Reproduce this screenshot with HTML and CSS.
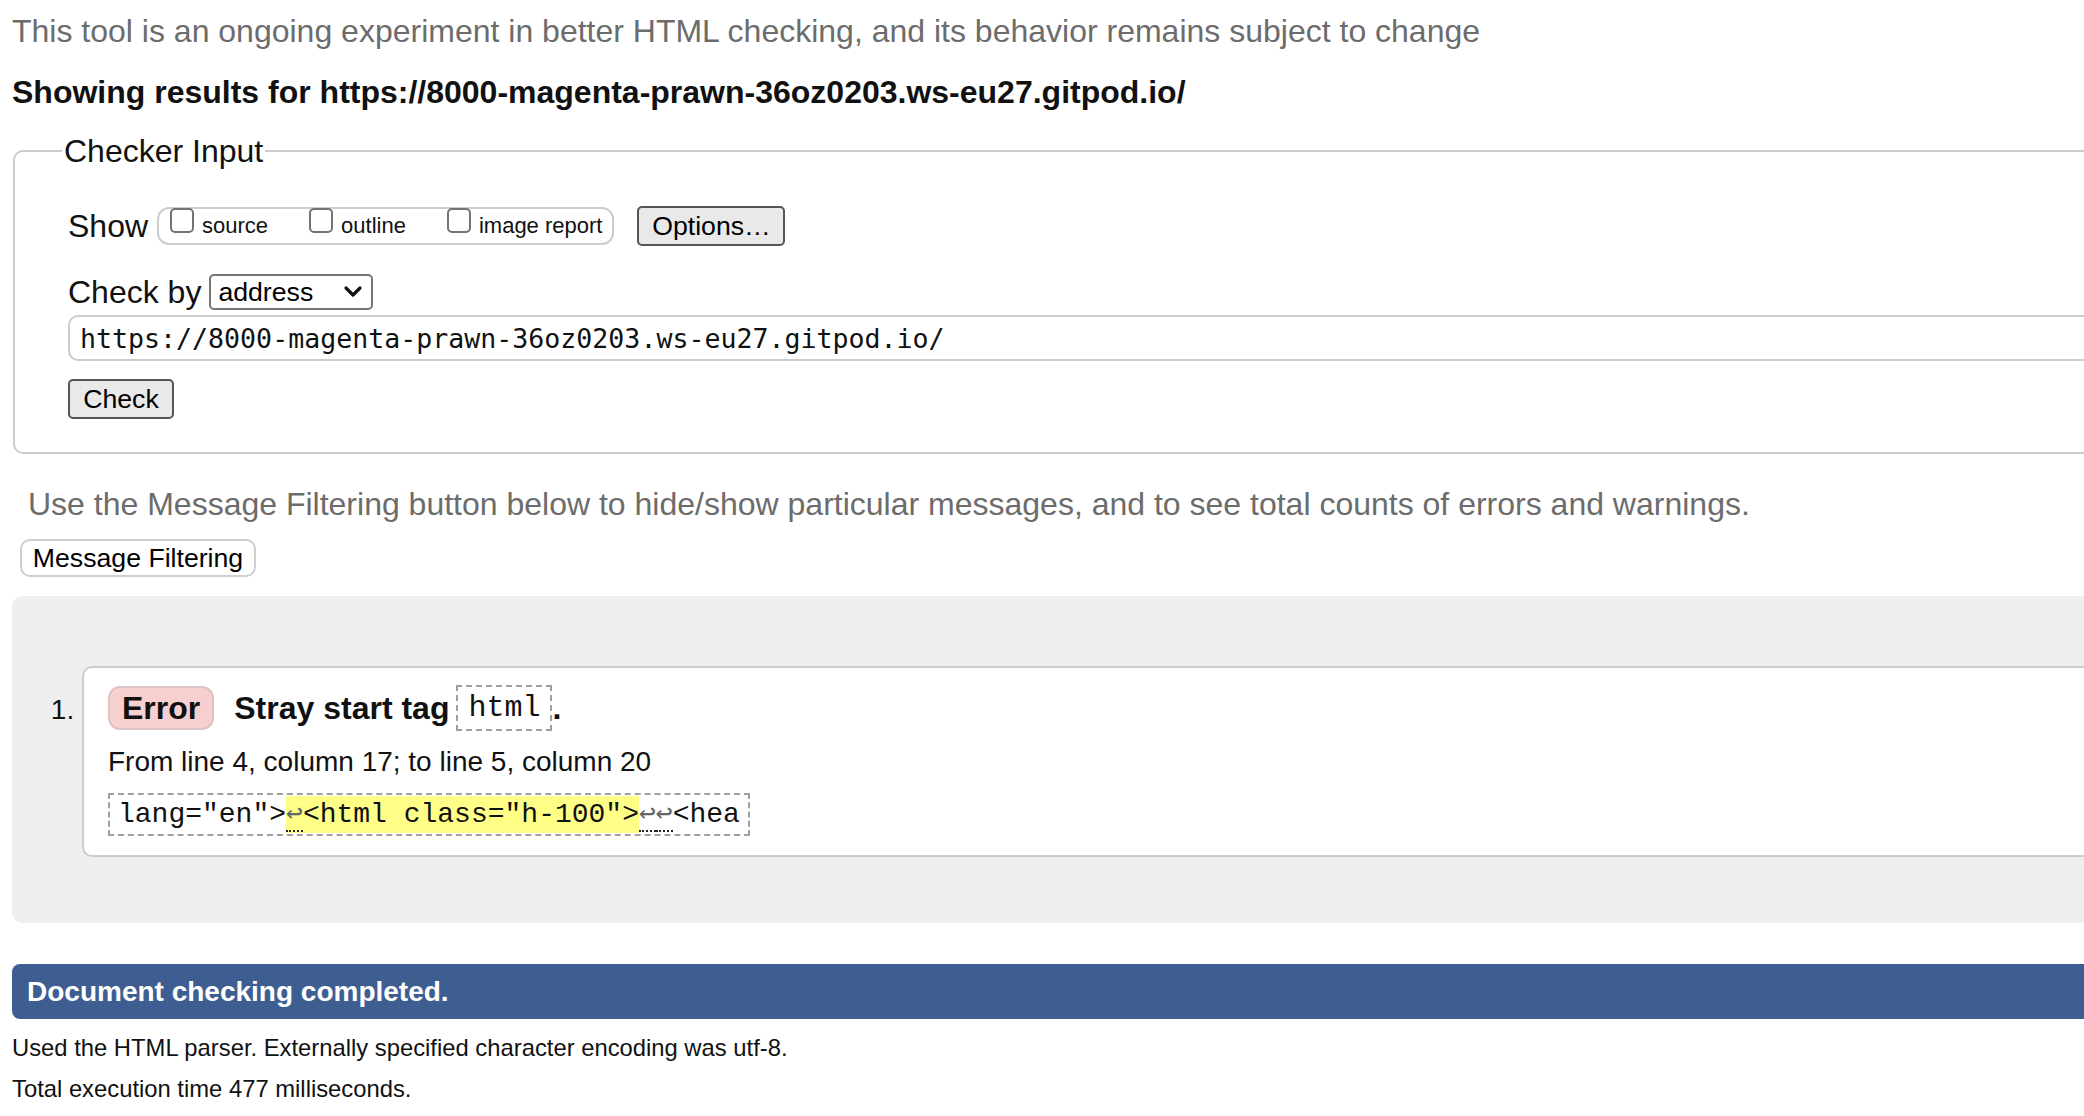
FILE: index.html
```html
<!DOCTYPE html>
<html lang="en">
<head>
<meta charset="utf-8">
<title>Nu Html Checker</title>
<link rel="stylesheet" href="styles.css">
</head>
<body>
<div class="page">
  <p class="intro">This tool is an ongoing experiment in better HTML checking, and its behavior remains subject to change</p>
  <h2 class="results-title">Showing results for https://8000-magenta-prawn-36oz0203.ws-eu27.gitpod.io/</h2>

  <form class="checker">
    <fieldset class="checker-fieldset">
      <legend class="checker-legend">Checker Input</legend>
      <div class="row show-row">
        <span class="row-label">Show</span>
        <div class="show-group">
          <label class="opt"><input class="box" type="checkbox"><span class="opt-text">source</span></label>
          <label class="opt"><input class="box" type="checkbox"><span class="opt-text">outline</span></label>
          <label class="opt opt-last"><input class="box" type="checkbox"><span class="opt-text">image report</span></label>
        </div>
        <button type="button" class="btn options-btn">Options…</button>
      </div>
      <div class="row checkby-row">
        <span class="row-label checkby-label">Check by</span>
        <span class="select-wrap">
          <select class="select"><option>address</option></select>
          <svg class="chevron" width="20" height="14" viewBox="0 0 20 14"><path d="M3 3 L10 10 L17 3" fill="none" stroke="#111" stroke-width="3.2" stroke-linecap="round" stroke-linejoin="round"/></svg>
        </span>
      </div>
      <input class="url" type="text" value="https://8000-magenta-prawn-36oz0203.ws-eu27.gitpod.io/">
      <div class="check-row"><button type="button" class="btn check-btn">Check</button></div>
    </fieldset>
  </form>

  <p class="filter-intro">Use the Message Filtering button below to hide/show particular messages, and to see total counts of errors and warnings.</p>
  <button type="button" class="filter-btn">Message Filtering</button>

  <div class="results">
    <ol class="messages">
      <li class="message">
        <div class="msg-box">
          <p class="msg-title"><span class="badge">Error</span><span class="msg-text">Stray start tag</span><code class="title-code">html</code><span class="msg-dot">.</span></p>
          <p class="location">From line 4, column 17; to line 5, column 20</p>
          <p class="extract-line"><code class="extract">lang="en"&gt;<mark class="hl"><span class="lf">↩</span>&lt;html class="h-100"&gt;</mark><span class="lf">↩</span><span class="lf">↩</span>&lt;hea</code></p>
        </div>
      </li>
    </ol>
  </div>

  <p class="done">Document checking completed.</p>
  <p class="details">Used the HTML parser. Externally specified character encoding was utf-8.</p>
  <p class="details">Total execution time 477 milliseconds.</p>
</div>
</body>
</html>
```

FILE: styles.css
```css
html {
  overflow: hidden;
  background: #fff;
}
body {
  margin: 0;
  padding: 0 0 0 12px;
  font-family: "Liberation Sans", Arial, Helvetica, sans-serif;
  color: #000;
}
.page {
  width: 2600px;
}
.intro {
  margin: 0;
  padding-top: 11px;
  font-size: 32px;
  line-height: 40px;
  color: #6c6c6c;
}
.results-title {
  margin: 21px 0 0 0;
  font-size: 32px;
  line-height: 40px;
  font-weight: bold;
  color: #111;
}

/* checker form */
.checker {
  margin: 21px 0 0 0;
}
.checker-fieldset {
  box-sizing: border-box;
  width: 2600px;
  margin: 0 0 0 1px;
  padding: 36px 0 33px 53px;
  border: 2px solid #cccccc;
  border-radius: 10px;
  min-width: 0;
}
.checker-legend {
  margin-left: -6px;
  padding: 0 2px;
  font-size: 32px;
  line-height: 36px;
  color: #111;
}
.row {
  display: flex;
  align-items: center;
}
.show-row {
  height: 42px;
}
.row-label {
  font-size: 32px;
  line-height: 40px;
  color: #111;
}
.show-group {
  box-sizing: border-box;
  height: 38px;
  margin-left: 9px;
  padding: 0 10px 0 11px;
  border: 2px solid #cccccc;
  border-radius: 12px;
  display: flex;
  align-items: flex-start;
}
.opt {
  display: flex;
  align-items: flex-start;
  margin-right: 41px;
}
.opt-last {
  margin-right: 0;
}
.box {
  appearance: none;
  -webkit-appearance: none;
  box-sizing: border-box;
  width: 24px;
  height: 25px;
  margin: -1px 8px 0 0;
  border: 2px solid #737373;
  border-radius: 5px;
  background: #fff;
}
.opt-text {
  font-size: 22px;
  line-height: 30px;
  margin-top: 2px;
  color: #111;
}
.btn {
  box-sizing: border-box;
  height: 40px;
  border: 2px solid #555555;
  border-radius: 5px;
  background: #e9e9e9;
  font-family: "Liberation Sans", Arial, Helvetica, sans-serif;
  font-size: 26.67px;
  line-height: 36px;
  color: #000;
  padding: 0 12px;
}
.options-btn {
  margin-left: 23px;
  width: 148px;
}
.checkby-row {
  height: 40px;
  margin-top: 25px;
}
.checkby-label {
  margin-right: 8px;
}
.select-wrap {
  position: relative;
  display: inline-flex;
}
.select {
  appearance: none;
  -webkit-appearance: none;
  box-sizing: border-box;
  width: 164px;
  height: 36px;
  margin: 0;
  padding: 0 0 0 7px;
  border: 2px solid #767676;
  border-radius: 5px;
  background: #fff;
  font-family: "Liberation Sans", Arial, Helvetica, sans-serif;
  font-size: 26.67px;
  color: #000;
}
.chevron {
  position: absolute;
  right: 10px;
  top: 11px;
  pointer-events: none;
}
.url {
  display: block;
  box-sizing: border-box;
  width: 2600px;
  height: 46px;
  margin: 3px 0 0 0;
  padding: 0 0 0 10px;
  border: 2px solid #cccccc;
  border-radius: 10px;
  font-family: "DejaVu Sans Mono", monospace;
  font-size: 26.6px;
  color: #111;
  background: #fff;
}
.check-row {
  margin-top: 18px;
  display: flex;
}
.check-btn {
  width: 106px;
}

/* filtering */
.filter-intro {
  margin: 30px 0 0 0;
  padding-left: 16px;
  font-size: 32px;
  line-height: 40px;
  color: #6c6c6c;
}
.filter-btn {
  display: block;
  box-sizing: border-box;
  width: 236px;
  height: 38px;
  margin: 15px 0 0 8px;
  padding: 0;
  border: 2px solid #cfcfcf;
  border-radius: 10px;
  background: #fff;
  font-family: "Liberation Sans", Arial, Helvetica, sans-serif;
  font-size: 26.67px;
  line-height: 34px;
  color: #000;
}

/* results */
.results {
  margin-top: 19px;
  padding: 70px 0 66px 0;
  background: #efefef;
  border-radius: 10px;
}
.messages {
  margin: 0;
  padding-left: 70px;
  font-size: 28px;
  color: #111;
}
.message {
  margin: 0;
}
.msg-box {
  border: 2px solid #cccccc;
  border-radius: 10px;
  background: #fff;
  padding: 17px 0 19px 24px;
}
.msg-title {
  margin: 0;
  height: 46px;
  display: flex;
  align-items: center;
}
.badge {
  box-sizing: border-box;
  height: 44px;
  padding: 0 12px;
  border: 2px solid #dcc4c4;
  border-radius: 12px;
  background: #f7cfcf;
  font-size: 32px;
  line-height: 40px;
  font-weight: bold;
  color: #111;
}
.msg-text {
  margin-left: 20px;
  margin-right: 7px;
  font-size: 32px;
  line-height: 40px;
  font-weight: bold;
  color: #111;
}
.title-code {
  box-sizing: border-box;
  height: 46px;
  padding: 0 10px;
  border: 2px dashed #a0a0a0;
  font-family: "Liberation Mono", "Courier New", monospace;
  font-size: 30px;
  line-height: 42px;
  color: #111;
}
.msg-dot {
  font-size: 32px;
  line-height: 40px;
  font-weight: bold;
}
.location {
  margin: 13px 0 0 0;
  font-size: 28px;
  line-height: 36px;
  color: #111;
}
.extract-line {
  margin: 13px 0 0 0;
  line-height: 0;
}
.extract {
  display: inline-block;
  box-sizing: border-box;
  height: 43px;
  padding: 0 8px;
  border: 2px dashed #a0a0a0;
  font-family: "Liberation Mono", "DejaVu Sans Mono", monospace;
  font-size: 28px;
  line-height: 39px;
  color: #111;
  white-space: pre;
}
.hl {
  background: #ffff88;
  color: #111;
  padding: 3px 0;
}
.lf {
  color: #666;
  border-bottom: 2px dotted #222;
}

/* footer */
.done {
  margin: 41px 0 0 0;
  height: 55px;
  padding-left: 15px;
  background: #3e5e92;
  border-radius: 8px;
  color: #fff;
  font-size: 28px;
  line-height: 55px;
  font-weight: bold;
}
.details {
  margin: 0;
  font-size: 23.8px;
  line-height: 41px;
  color: #111;
}
.done + .details {
  margin-top: 8px;
}
```
